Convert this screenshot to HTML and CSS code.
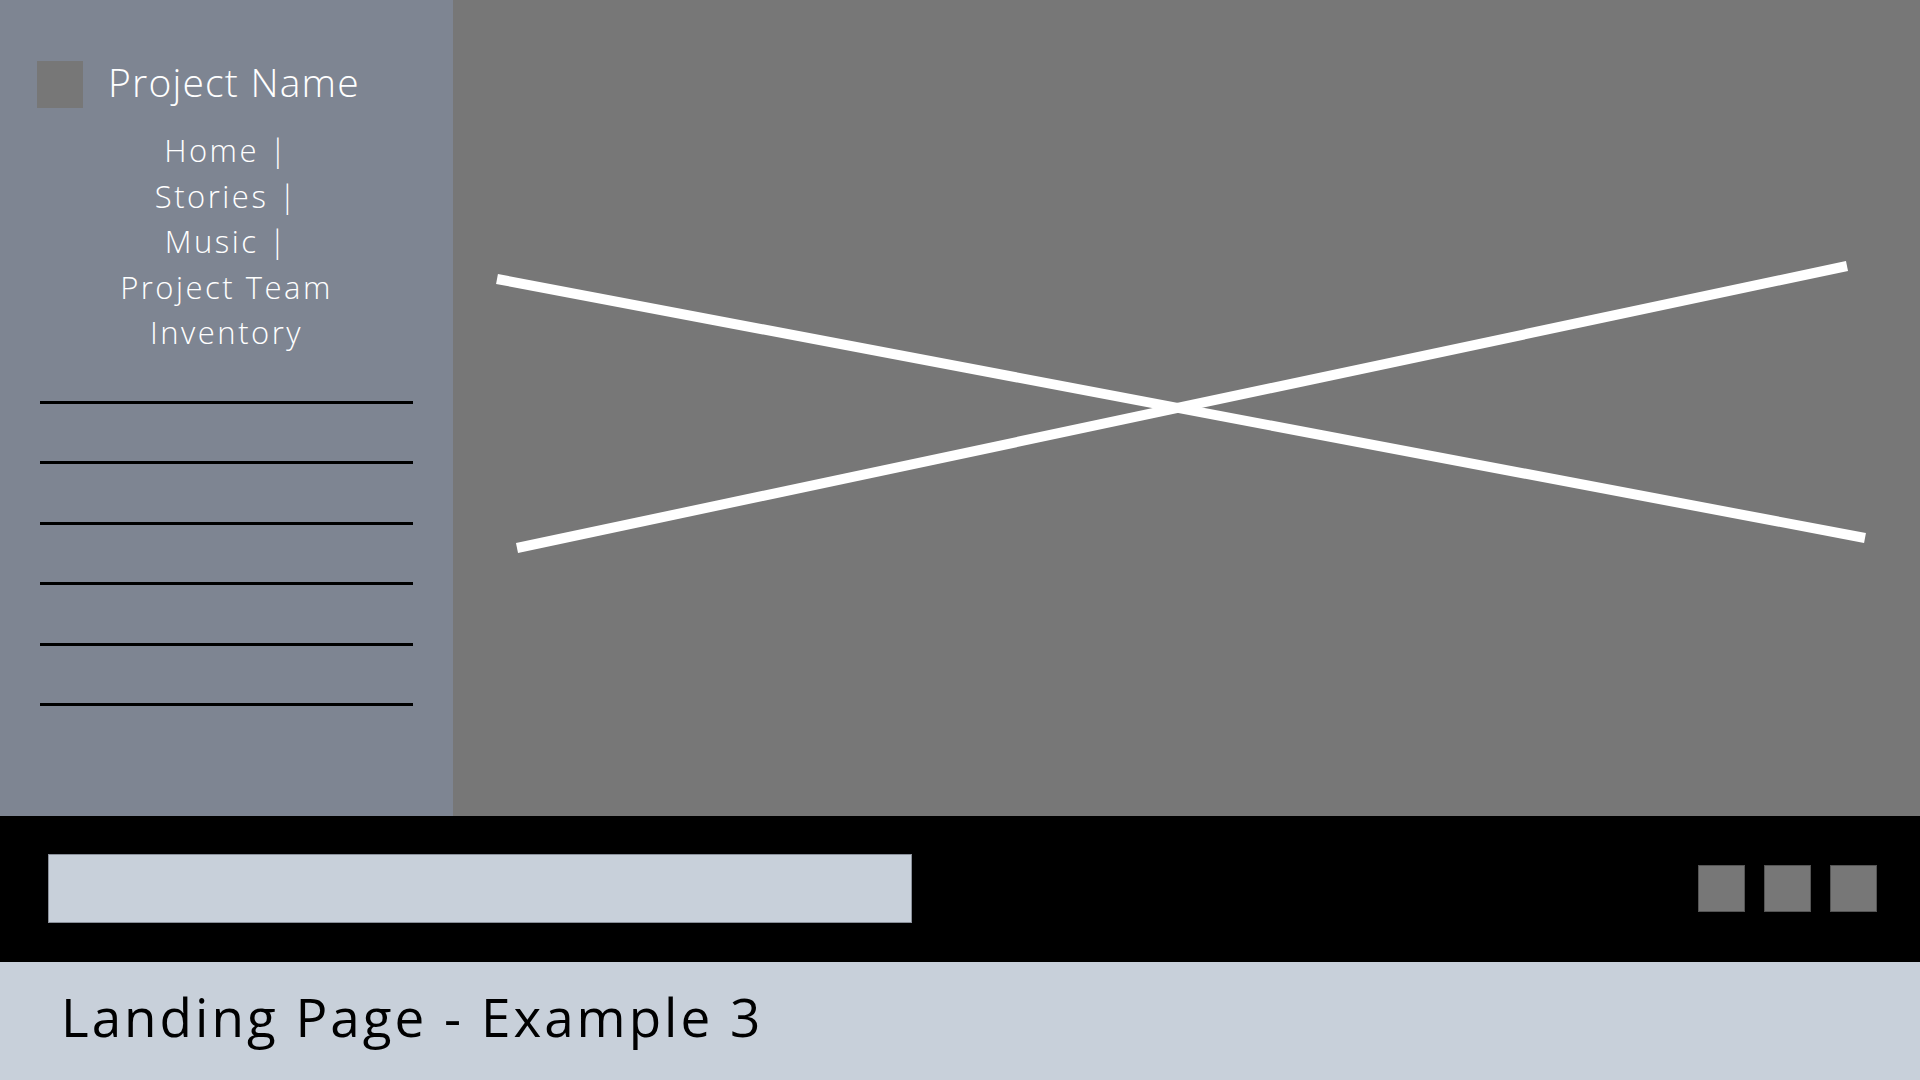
FILE: index.html
```html
<!DOCTYPE html>
<html lang="en">
<head>
    <meta charset="UTF-8">
    <meta name="viewport" content="width=device-width, initial-scale=1.0">
    <title>Landing Page - Example 3</title>
    <link rel="stylesheet" href="styles.css">
</head>
<body>
    <div class="page">
        <div class="top">
            <aside class="sidebar">
                <div class="brand">
                    <div class="logo"></div>
                    <span class="brand-name">Project Name</span>
                </div>

                <nav class="nav">
                    <a href="#">Home |</a>
                    <a href="#">Stories |</a>
                    <a href="#">Music |</a>
                    <a href="#">Project Team</a>
                    <a href="#">Inventory</a>
                </nav>

                <div class="rules">
                    <div class="rule"></div>
                    <div class="rule"></div>
                    <div class="rule"></div>
                    <div class="rule"></div>
                    <div class="rule"></div>
                    <div class="rule"></div>
                </div>
            </aside>

            <main class="hero">
                <svg class="placeholder" viewBox="0 0 1467 816" width="1467" height="816">
                    <line x1="44" y1="279" x2="1412" y2="538" stroke="#fff" stroke-width="10"/>
                    <line x1="64" y1="548" x2="1394" y2="266" stroke="#fff" stroke-width="10"/>
                </svg>
            </main>
        </div>

        <div class="toolbar">
            <div class="search"></div>
            <div class="tools">
                <div class="tool"></div>
                <div class="tool"></div>
                <div class="tool"></div>
            </div>
        </div>

        <footer class="caption">
            <h1>Landing Page - Example 3</h1>
        </footer>
    </div>
</body>
</html>
```

FILE: styles.css
```css
body {
    font-family: "Open Sans", Arial, sans-serif;
    margin: 0;
    padding: 0;
    background-color: #000;
    color: white;
}

.page {
    width: 1920px;
    height: 1080px;
    display: flex;
    flex-direction: column;
    overflow: hidden;
}

.top {
    display: flex;
    height: 816px;
}

.sidebar {
    width: 453px;
    background: #7e8592;
    padding-top: 61px;
    box-sizing: border-box;
}

.brand {
    display: flex;
    align-items: center;
    padding-left: 37px;
}

.logo {
    width: 46px;
    height: 47px;
    background: #777;
    margin-right: 25px;
}

.brand-name {
    font-size: 39px;
    line-height: 40px;
    font-weight: 300;
    letter-spacing: 1.2px;
    position: relative;
    top: -3px;
}

.nav {
    display: flex;
    flex-direction: column;
    align-items: center;
    margin-top: 20px;
}

.nav a {
    color: white;
    text-decoration: none;
    font-size: 31px;
    font-weight: 300;
    line-height: 45.5px;
    letter-spacing: 2.5px;
}

.rules {
    display: flex;
    flex-direction: column;
    gap: 57.6px;
    margin: 45px 40px 0 40px;
}

.rule {
    height: 3px;
    background: #000;
}

.hero {
    flex: 1;
    background: #777;
}

.placeholder {
    display: block;
}

.toolbar {
    height: 146px;
    background: #000;
    display: flex;
    align-items: center;
    padding: 0 43px 0 48px;
}

.search {
    width: 864px;
    height: 69px;
    background: #c8d0da;
    box-sizing: border-box;
    border: 1px solid #8a909a;
    position: relative;
    top: -1px;
}

.tools {
    display: flex;
    gap: 19px;
    margin-left: auto;
    position: relative;
    top: -1px;
}

.tool {
    width: 47px;
    height: 47px;
    background: #777;
    box-sizing: border-box;
    border: 1px solid #555;
}

.caption {
    flex: 1;
    background: #c8d0da;
    padding: 28px 0 0 61px;
}

.caption h1 {
    margin: 0;
    color: #000;
    font-size: 53px;
    font-weight: 400;
    line-height: 54px;
    letter-spacing: 3px;
}
```
